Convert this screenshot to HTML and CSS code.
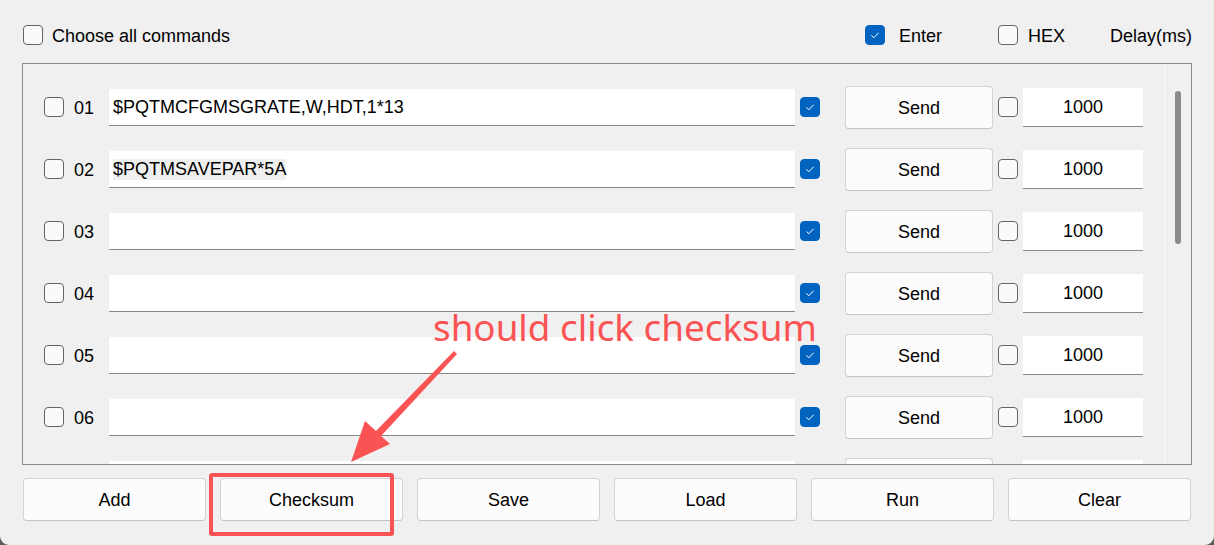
FILE: index.html
```html
<!DOCTYPE html>
<html>
<head>
<meta charset="utf-8">
<link rel="stylesheet" href="styles.css">
</head>
<body>
<div class="window">
  <div class="topbar">
    <span class="cb"></span>
    <span class="top-label">Choose all commands</span>
    <div class="top-right">
      <span class="cb checked"><svg viewBox="0 0 20 20"><polyline points="6,10.5 8.8,13 14,7.5"/></svg></span>
      <span class="lbl-enter">Enter</span>
      <span class="cb cb-hex"></span>
      <span class="lbl-hex">HEX</span>
      <span class="lbl-delay">Delay(ms)</span>
    </div>
  </div>

  <div class="panel">
    <div class="list">
      <div class="row">
        <span class="cb"></span><span class="num">01</span>
        <div class="cmd">$PQTMCFGMSGRATE,W,HDT,1*13</div>
        <span class="cb checked cb-enter"><svg viewBox="0 0 20 20"><polyline points="6,10.5 8.8,13 14,7.5"/></svg></span>
        <div class="send">Send</div>
        <span class="cb cb-delay"></span>
        <div class="delay">1000</div>
      </div>
      <div class="row">
        <span class="cb"></span><span class="num">02</span>
        <div class="cmd"><span class="sel">$PQTMSAVEPAR*5A</span></div>
        <span class="cb checked cb-enter"><svg viewBox="0 0 20 20"><polyline points="6,10.5 8.8,13 14,7.5"/></svg></span>
        <div class="send">Send</div>
        <span class="cb cb-delay"></span>
        <div class="delay">1000</div>
      </div>
      <div class="row">
        <span class="cb"></span><span class="num">03</span>
        <div class="cmd"></div>
        <span class="cb checked cb-enter"><svg viewBox="0 0 20 20"><polyline points="6,10.5 8.8,13 14,7.5"/></svg></span>
        <div class="send">Send</div>
        <span class="cb cb-delay"></span>
        <div class="delay">1000</div>
      </div>
      <div class="row">
        <span class="cb"></span><span class="num">04</span>
        <div class="cmd"></div>
        <span class="cb checked cb-enter"><svg viewBox="0 0 20 20"><polyline points="6,10.5 8.8,13 14,7.5"/></svg></span>
        <div class="send">Send</div>
        <span class="cb cb-delay"></span>
        <div class="delay">1000</div>
      </div>
      <div class="row">
        <span class="cb"></span><span class="num">05</span>
        <div class="cmd"></div>
        <span class="cb checked cb-enter"><svg viewBox="0 0 20 20"><polyline points="6,10.5 8.8,13 14,7.5"/></svg></span>
        <div class="send">Send</div>
        <span class="cb cb-delay"></span>
        <div class="delay">1000</div>
      </div>
      <div class="row">
        <span class="cb"></span><span class="num">06</span>
        <div class="cmd"></div>
        <span class="cb checked cb-enter"><svg viewBox="0 0 20 20"><polyline points="6,10.5 8.8,13 14,7.5"/></svg></span>
        <div class="send">Send</div>
        <span class="cb cb-delay"></span>
        <div class="delay">1000</div>
      </div>
      <div class="row">
        <span class="cb"></span><span class="num"></span>
        <div class="cmd"></div>
        <span class="cb checked cb-enter"><svg viewBox="0 0 20 20"><polyline points="6,10.5 8.8,13 14,7.5"/></svg></span>
        <div class="send"></div>
        <span class="cb cb-delay"></span>
        <div class="delay"></div>
      </div>
    </div>
    <div class="track"><div class="thumb"></div></div>
  </div>

  <div class="buttons">
    <div class="btn">Add</div>
    <div class="btn">Checksum</div>
    <div class="btn">Save</div>
    <div class="btn">Load</div>
    <div class="btn">Run</div>
    <div class="btn">Clear</div>
  </div>

  <div class="note">should click checksum</div>
  <svg class="arrow" viewBox="0 0 1214 545" width="1214" height="545">
    <polygon points="454,351 457,354 381,436 390,444 351,462 365,421 376,431"/>
  </svg>
  <div class="highlight"></div>
</div>
</body>
</html>
```

FILE: styles.css
```css
html, body {
  margin: 0;
  padding: 0;
  background: #5c5c5c;
}

body {
  width: 1214px;
  height: 545px;
  overflow: hidden;
  font-family: "Liberation Sans", Arial, sans-serif;
  font-size: 18px;
  color: #000;
}

.window {
  position: relative;
  width: 1214px;
  height: 545px;
  background: #f0f0f0;
  border-radius: 0 0 9px 9px;
  overflow: hidden;
}

.cb {
  box-sizing: border-box;
  width: 20px;
  height: 20px;
  border: 1px solid #636363;
  border-radius: 4px;
  background: #fafafa;
  flex: none;
  display: inline-flex;
}

.cb.checked {
  background: #0063bf;
  border-color: #0063bf;
}

.cb svg {
  width: 100%;
  height: 100%;
}

.cb svg polyline {
  fill: none;
  stroke: #ffffff;
  stroke-width: 1.1;
}

.topbar {
  box-sizing: border-box;
  height: 63px;
  padding: 25px 22px 0 23px;
  display: flex;
  align-items: flex-start;
}

.top-label {
  margin-left: 9px;
  line-height: 21px;
  padding-top: 1px;
}

.top-right {
  margin-left: auto;
  display: flex;
  align-items: flex-start;
  line-height: 21px;
}

.top-right span:not(.cb) { padding-top: 1px; }

.lbl-enter { margin-left: 14px; width: 99px; }
.lbl-hex { margin-left: 10px; width: 82px; }

.panel {
  box-sizing: border-box;
  margin-left: 22px;
  width: 1170px;
  height: 402px;
  border: 1px solid #8b8b8b;
  display: flex;
  overflow: hidden;
}

.list {
  flex: 1;
  padding-top: 12px;
  padding-left: 21px;
  overflow: hidden;
}

.row {
  height: 62px;
  display: flex;
  align-items: center;
}

.num {
  margin-left: 10px;
  width: 35px;
  line-height: 20px;
  padding-top: 1px;
}

.cmd {
  box-sizing: border-box;
  width: 686px;
  height: 37px;
  background: #ffffff;
  border-bottom: 1px solid #868686;
  padding-left: 4px;
  padding-top: 2px;
  display: flex;
  align-items: center;
  white-space: nowrap;
}

.sel {
  background: #efefef;
  line-height: 21px;
}

.cb-enter { margin-left: 5px; }

.send {
  box-sizing: border-box;
  margin-left: 25px;
  width: 148px;
  height: 43px;
  padding-top: 2px;
  background: #fcfcfc;
  border: 1px solid #d3d3d3;
  border-bottom-color: #c4c4c4;
  border-radius: 4px;
  display: flex;
  align-items: center;
  justify-content: center;
}

.cb-delay { margin-left: 5px; }

.delay {
  box-sizing: border-box;
  margin-left: 5px;
  width: 120px;
  height: 39px;
  padding-top: 1px;
  background: #ffffff;
  border-bottom: 1px solid #8a8a8a;
  display: flex;
  align-items: center;
  justify-content: center;
}

.track {
  width: 26px;
  border-left: 1px solid #fbfbfb;
  flex: none;
}

.thumb {
  margin-top: 27px;
  margin-left: 10px;
  width: 6px;
  height: 153px;
  border-radius: 3px;
  background: #8a8a8a;
}

.buttons {
  margin: 13px 0 0 23px;
  width: 1168px;
  display: flex;
  gap: 14px;
}

.btn {
  box-sizing: border-box;
  flex: 1;
  height: 43px;
  padding-top: 2px;
  background: #fcfcfc;
  border: 1px solid #d3d3d3;
  border-bottom-color: #c4c4c4;
  border-radius: 4px;
  display: flex;
  align-items: center;
  justify-content: center;
}

.note {
  position: absolute;
  left: 433px;
  top: 302px;
  font-family: "Noto Sans", sans-serif;
  font-size: 36.8px;
  line-height: 50px;
  color: #fb5353;
  white-space: nowrap;
}

.arrow {
  position: absolute;
  left: 0;
  top: 0;
}

.arrow polygon {
  fill: #fb5353;
}

.highlight {
  position: absolute;
  left: 209px;
  top: 473px;
  width: 185px;
  height: 63px;
  box-sizing: border-box;
  border: 4px solid #fb5353;
  border-radius: 3px;
}
```
